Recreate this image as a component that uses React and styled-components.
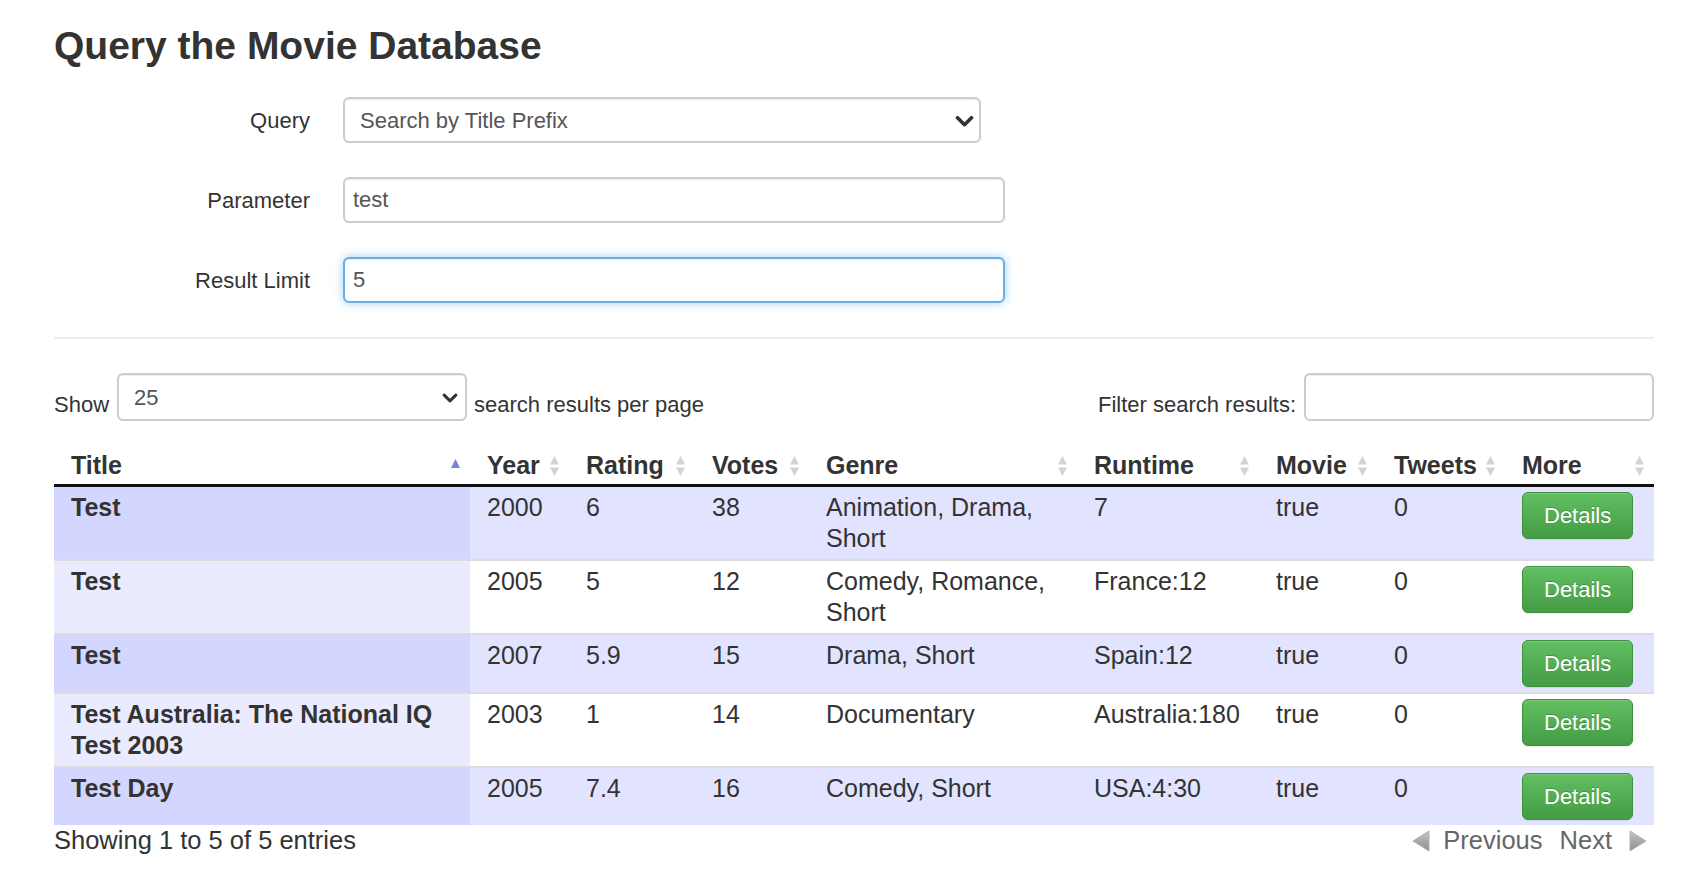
import React from "react";
import styled, { createGlobalStyle } from "styled-components";

const GlobalStyle = createGlobalStyle`
  body {
    margin: 0;
    background: #fff;
    color: #333;
    font-family: "Liberation Sans", Arial, Helvetica, sans-serif;
  }
`;

const rows = [
  { title: "Test", year: "2000", rating: "6", votes: "38", genre: "Animation, Drama, Short", runtime: "7" },
  { title: "Test", year: "2005", rating: "5", votes: "12", genre: "Comedy, Romance, Short", runtime: "France:12" },
  { title: "Test", year: "2007", rating: "5.9", votes: "15", genre: "Drama, Short", runtime: "Spain:12" },
  { title: "Test Australia: The National IQ Test 2003", year: "2003", rating: "1", votes: "14", genre: "Documentary", runtime: "Australia:180" },
  { title: "Test Day", year: "2005", rating: "7.4", votes: "16", genre: "Comedy, Short", runtime: "USA:4:30" },
];

const columns = [
  { label: "Title", width: 416, sort: "asc" },
  { label: "Year", width: 99 },
  { label: "Rating", width: 126 },
  { label: "Votes", width: 114 },
  { label: "Genre", width: 268 },
  { label: "Runtime", width: 182 },
  { label: "Movie", width: 118 },
  { label: "Tweets", width: 128 },
  { label: "More", width: 149 },
];

const Chevron = ({ w = 19, h = 12 }) => (
  <ChevronSvg width={w} height={h} viewBox="0 0 19 12">
    <polyline
      points="2.5,2.5 9.5,9.5 16.5,2.5"
      fill="none"
      stroke="#333"
      strokeWidth="3.6"
      strokeLinecap="round"
      strokeLinejoin="round"
    />
  </ChevronSvg>
);

const SortIcon = ({ dir }) => (
  <svg width="9" height="22" viewBox="0 0 9 22">
    {dir === "asc" ? (
      <polygon points="0,13 4.5,4 9,13" fill="#7a83d9" />
    ) : (
      <>
        <polygon points="0,9.5 4.5,1 9,9.5" fill="#d4d4d4" />
        <polygon points="0,12.5 4.5,21 9,12.5" fill="#d4d4d4" />
      </>
    )}
  </svg>
);

const Arrow = ({ dir }) => (
  <svg width="18" height="22" viewBox="0 0 18 22">
    <defs>
      <linearGradient id={`arr-${dir}`} x1="0" y1="0" x2="0" y2="1">
        <stop offset="0" stopColor="#c4c4c4" />
        <stop offset="1" stopColor="#8f8f8f" />
      </linearGradient>
    </defs>
    <polygon
      points={dir === "left" ? "17,1 17,21 1,11" : "1,1 1,21 17,11"}
      fill={`url(#arr-${dir})`}
      stroke="#b0b0b0"
      strokeWidth="1"
      strokeLinejoin="round"
    />
  </svg>
);

const App = () => {
  return (
    <Page>
      <GlobalStyle />
      <Heading>Query the Movie Database</Heading>

      <FormRow>
        <Label>Query</Label>
        <SelectWrap $width={638}>
          <Select defaultValue="prefix">
            <option value="prefix">Search by Title Prefix</option>
          </Select>
          <ChevronSpot $right={7}>
            <Chevron />
          </ChevronSpot>
        </SelectWrap>
      </FormRow>
      <FormRow>
        <Label>Parameter</Label>
        <TextInput $width={662} defaultValue="test" />
      </FormRow>
      <FormRow>
        <Label>Result Limit</Label>
        <TextInput $width={662} $focused defaultValue="5" />
      </FormRow>

      <Divider />

      <ToolRow>
        <Group>
          <ToolText>Show</ToolText>
          <SelectWrap $width={350} $height={48}>
            <Select $pad={15} defaultValue="25">
              <option value="25">25</option>
            </Select>
            <ChevronSpot $right={9}>
              <Chevron w={16} h={10} />
            </ChevronSpot>
          </SelectWrap>
          <ToolText $gap={7}>search results per page</ToolText>
        </Group>
        <Group>
          <ToolText>Filter search results:</ToolText>
          <FilterInput />
        </Group>
      </ToolRow>

      <Table>
        <colgroup>
          {columns.map((c) => (
            <col key={c.label} style={{ width: c.width }} />
          ))}
        </colgroup>
        <thead>
          <tr>
            {columns.map((c) => (
              <Th key={c.label}>
                <HeadInner>
                  <span>{c.label}</span>
                  <SortIcon dir={c.sort} />
                </HeadInner>
              </Th>
            ))}
          </tr>
        </thead>
        <tbody>
          {rows.map((r, i) => {
            const odd = i % 2 === 0;
            return (
              <tr key={i}>
                <Td $odd={odd} $sorted>
                  <strong>{r.title}</strong>
                </Td>
                <Td $odd={odd}>{r.year}</Td>
                <Td $odd={odd}>{r.rating}</Td>
                <Td $odd={odd}>{r.votes}</Td>
                <Td $odd={odd}>{r.genre}</Td>
                <Td $odd={odd}>{r.runtime}</Td>
                <Td $odd={odd}>true</Td>
                <Td $odd={odd}>0</Td>
                <Td $odd={odd}>
                  <DetailsButton>Details</DetailsButton>
                </Td>
              </tr>
            );
          })}
        </tbody>
      </Table>

      <InfoRow>
        <span>Showing 1 to 5 of 5 entries</span>
        <Pager>
          <Arrow dir="left" />
          <PageLink>Previous</PageLink>
          <PageLink>Next</PageLink>
          <Arrow dir="right" />
        </Pager>
      </InfoRow>
    </Page>
  );
};
export default App;

const Page = styled.div`
  width: 1600px;
  padding: 24px 0 40px 54px;
`;

const Heading = styled.h2`
  margin: 0 0 30px;
  font-size: 39px;
  line-height: 43px;
  font-weight: bold;
  color: #333;
`;

const FormRow = styled.div`
  display: grid;
  grid-template-columns: 256px auto;
  column-gap: 33px;
  align-items: center;
  justify-content: start;
  margin-bottom: 34px;

  &:last-of-type {
    margin-bottom: 0;
  }
`;

const Label = styled.label`
  text-align: right;
  font-size: 22px;
  line-height: 31px;
  color: #333;
`;

const SelectWrap = styled.div`
  position: relative;
  width: ${(p) => p.$width}px;
  height: ${(p) => p.$height || 46}px;
`;

const Select = styled.select`
  appearance: none;
  -webkit-appearance: none;
  width: 100%;
  height: 100%;
  box-sizing: border-box;
  padding: 0 40px 0 ${(p) => p.$pad || 15}px;
  border: 2px solid #ccc;
  border-radius: 6px;
  background: #fff;
  font-family: inherit;
  font-size: 22px;
  color: #555;
  box-shadow: inset 0 1px 1px rgba(0, 0, 0, 0.075);
  outline: none;
`;

const ChevronSpot = styled.span`
  position: absolute;
  top: 50%;
  right: ${(p) => p.$right}px;
  transform: translateY(-40%);
  display: flex;
  pointer-events: none;
`;

const ChevronSvg = styled.svg`
  display: block;
`;

const TextInput = styled.input`
  width: ${(p) => p.$width}px;
  height: 46px;
  box-sizing: border-box;
  padding: 0 8px;
  border: 2px solid ${(p) => (p.$focused ? "#66afe9" : "#ccc")};
  border-radius: 6px;
  font-family: inherit;
  font-size: 22px;
  color: #555;
  outline: none;
  box-shadow: ${(p) =>
    p.$focused
      ? "inset 0 1px 1px rgba(0,0,0,.075), 0 0 10px rgba(102,175,233,.6)"
      : "inset 0 1px 1px rgba(0,0,0,.075)"};
`;

const Divider = styled.hr`
  margin: 33px 0 34px;
  border: 0;
  border-top: 2px solid #eee;
`;

const ToolRow = styled.div`
  display: flex;
  justify-content: space-between;
  align-items: flex-end;
  height: 48px;
`;

const Group = styled.div`
  display: flex;
  align-items: flex-end;
`;

const ToolText = styled.span`
  font-size: 22px;
  line-height: 31px;
  padding-bottom: 1px;
  margin: 0 ${(p) => (p.$gap ? 0 : 8)}px 0 ${(p) => p.$gap || 0}px;
  white-space: nowrap;
`;

const FilterInput = styled.input`
  width: 350px;
  height: 48px;
  box-sizing: border-box;
  border: 2px solid #ccc;
  border-radius: 6px;
  font-family: inherit;
  font-size: 22px;
  outline: none;
  box-shadow: inset 0 1px 1px rgba(0, 0, 0, 0.075);
`;

const Table = styled.table`
  margin-top: 24px;
  width: 1600px;
  table-layout: fixed;
  border-collapse: collapse;
  font-size: 25px;
  line-height: 31px;
  color: #333;
`;

const Th = styled.th`
  padding: 5px 10px 3px 17px;
  text-align: left;
  font-weight: bold;
  border-bottom: 3px solid #111;
`;

const HeadInner = styled.div`
  display: flex;
  justify-content: space-between;
  align-items: center;
  white-space: nowrap;
`;

const cellBg = (p) => {
  if (p.$odd) return p.$sorted ? "#d3d6ff" : "#e2e4ff";
  return p.$sorted ? "#eaebff" : "#fff";
};

const Td = styled.td`
  padding: 5px 6px 5px 17px;
  vertical-align: top;
  border-top: 2px solid #ddd;
  background: ${cellBg};
`;

const DetailsButton = styled.button`
  display: inline-block;
  vertical-align: top;
  height: 47px;
  padding: 0 21px;
  border: 1px solid #3e8f3e;
  border-radius: 6px;
  background: linear-gradient(to bottom, #62bf62 0%, #449c44 100%);
  color: #fff;
  font-family: inherit;
  font-size: 22px;
  line-height: 29px;
  text-shadow: 0 -1px 0 rgba(0, 0, 0, 0.2);
  box-shadow: inset 0 1px 0 rgba(255, 255, 255, 0.15), 0 1px 1px rgba(0, 0, 0, 0.075);
  cursor: pointer;
`;

const InfoRow = styled.div`
  display: flex;
  justify-content: space-between;
  align-items: center;
  font-size: 25.5px;
  line-height: 31px;
  color: #333;
`;

const Pager = styled.div`
  display: flex;
  align-items: center;
  gap: 13px;
  padding-right: 7px;
`;

const PageLink = styled.span`
  color: #666;
  margin-right: 4px;
`;
